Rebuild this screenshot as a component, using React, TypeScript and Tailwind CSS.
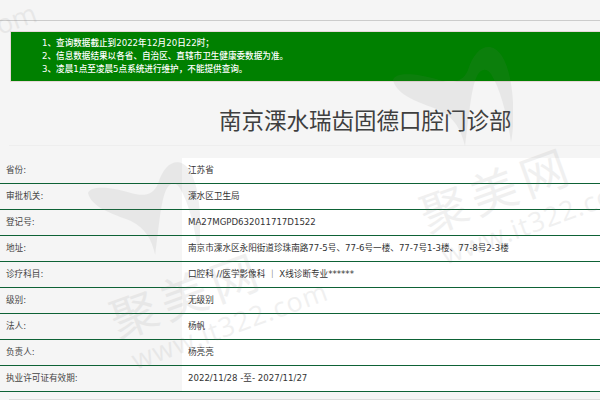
import React from 'react';

const rows = [
  { label: '省份:', value: '江苏省' },
  { label: '审批机关:', value: '溧水区卫生局' },
  { label: '登记号:', value: 'MA27MGPD632011717D1522' },
  { label: '地址:', value: '南京市溧水区永阳街道珍珠南路77-5号、77-6号一楼、77-7号1-3楼、77-8号2-3楼' },
  { label: '诊疗科目:', value: '口腔科 //医学影像科 ｜ X线诊断专业******' },
  { label: '级别:', value: '无级别' },
  { label: '法人:', value: '杨帆' },
  { label: '负责人:', value: '杨亮亮' },
  { label: '执业许可证有效期:', value: '2022/11/28 -至- 2027/11/27' },
];

const notices = [
  '1、查询数据截止到2022年12月20日22时；',
  '2、信息数据结果以各省、自治区、直辖市卫生健康委数据为准。',
  '3、凌晨1点至凌晨5点系统进行维护，不能提供查询。',
];

// swoosh of the watermark logo
const Swoosh = ({ className }: { className: string }) => (
  <svg viewBox="0 0 120 100" className={className}>
    <path
      d="M0 34 C3 26 22 27 46 34 C60 38 70 36 75 24 C80 8 88 0 97 1 C110 3 118 24 120 56 C121 72 120 86 118 96 C114 70 108 44 98 28 C94 22 88 22 84 30 C78 42 76 70 72 100 C68 84 62 72 46 64 C26 56 4 50 0 34 Z"
      fill="#777777"
    />
  </svg>
);

const Mark = ({ className }: { className: string }) => (
  <div className={`absolute flex w-[200px] -rotate-[20deg] flex-col items-center font-['Noto_Sans_CJK_SC',sans-serif] text-[#777] ${className}`}>
    <span className="whitespace-nowrap pr-6 text-[47px] leading-[52px] tracking-[6px]">聚美网</span>
    <span className="mt-1 whitespace-nowrap pl-9 font-['Open_Sans',sans-serif] text-[27px] leading-[30px] tracking-[1px]">www.it322.com</span>
  </div>
);

export default function App() {
  return (
    <div className="relative h-[400px] w-[600px] overflow-hidden bg-[#f5f5f5] font-['DejaVu_Sans','Noto_Sans_CJK_SC',sans-serif] text-[8.6px] text-[#333]">
      <div className="pt-5">
        <div className="h-px bg-[#cccccc]" />
        <div className="ml-[10px] mt-[10px] flex h-[51px] flex-col justify-center border border-r-0 border-[#e8d8d8] bg-[#008000] pl-[31px] font-medium leading-[13px] text-white">
          {notices.map((n) => (
            <div key={n}>{n}</div>
          ))}
        </div>
        <h1 className="mt-[24px] pl-[219px] text-[22.5px] leading-[30px] text-[#3f3f3f]">南京溧水瑞齿固德口腔门诊部</h1>
        <div className="ml-[9px] mt-[9px] h-px bg-[#eeeeee]" />
        <div className="mt-3">
          {rows.map((r) => (
            <div key={r.label} className="flex h-[26px] border-b border-[#0e6236]">
              <div className="flex w-[182px] items-center pl-[6px] text-[#444]">{r.label}</div>
              <div className="flex flex-1 items-center bg-white pl-[6px]">{r.value}</div>
            </div>
          ))}
        </div>
        <div className="ml-[9px] mt-[7px] h-px bg-[#dddddd]" />
      </div>

      <div className="pointer-events-none absolute inset-0 opacity-10">
        <Swoosh className="absolute left-[393px] top-[46px] h-[100px] w-[120px]" />
        <Swoosh className="absolute left-[88px] top-[158px] h-[100px] w-[112px]" />
        <Mark className="left-[413px] top-[157px]" />
        <Mark className="left-[103px] top-[262px]" />
        <span className="absolute -left-[24px] top-[2px] -rotate-[20deg] font-['Open_Sans',sans-serif] text-[27px] text-[#777]">.com</span>
      </div>
    </div>
  );
}
